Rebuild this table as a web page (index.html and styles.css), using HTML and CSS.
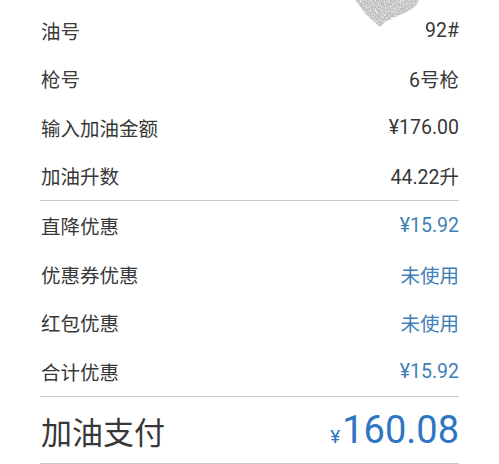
FILE: index.html
```html
<!DOCTYPE html>
<html lang="zh-CN">
<head>
<meta charset="utf-8">
<title>加油支付</title>
<link rel="stylesheet" href="styles.css">
</head>
<body>
<div class="page">
  <svg class="smudge" width="90" height="30" viewBox="0 0 90 30" aria-hidden="true">
    <defs>
      <filter id="grain" x="0" y="0" width="100%" height="100%">
        <feTurbulence type="fractalNoise" baseFrequency="0.8" numOctaves="2" seed="3" result="n"/>
        <feColorMatrix in="n" type="matrix" values="0 0 0 0 0.5  0 0 0 0 0.5  0 0 0 0 0.5  0 0 0 -2.2 1.9" result="g"/>
        <feComposite in="g" in2="SourceGraphic" operator="in"/>
      </filter>
    </defs>
    <polygon points="12,0 76,0 73,6 64,12 52,17 42,22 37,27 31,22 22,13" fill="#000" filter="url(#grain)"/>
  </svg>
  <section class="group">
    <div class="row"><span class="label">油号</span><span class="value">92#</span></div>
    <div class="row"><span class="label">枪号</span><span class="value">6号枪</span></div>
    <div class="row"><span class="label">输入加油金额</span><span class="value">¥176.00</span></div>
    <div class="row"><span class="label">加油升数</span><span class="value">44.22升</span></div>
  </section>
  <section class="group group-discount">
    <div class="row"><span class="label">直降优惠</span><span class="value blue">¥15.92</span></div>
    <div class="row"><span class="label">优惠券优惠</span><span class="value blue">未使用</span></div>
    <div class="row"><span class="label">红包优惠</span><span class="value blue">未使用</span></div>
    <div class="row"><span class="label">合计优惠</span><span class="value blue">¥15.92</span></div>
  </section>
  <section class="total">
    <span class="total-label">加油支付</span>
    <span class="total-value"><span class="yen">¥</span>160.08</span>
  </section>
</div>
</body>
</html>
```
FILE: styles.css
```css
html, body {
  margin: 0;
  padding: 0;
  background: #ffffff;
}
body {
  font-family: "Roboto", "Noto Sans CJK SC", sans-serif;
  color: #383838;
}
.page {
  position: relative;
  padding: 6px 40px 0 40px;
  height: 458px;
  overflow: hidden;
}
.smudge {
  position: absolute;
  top: 0;
  left: 343px;
}
.group {
  display: flex;
  flex-direction: column;
}
.group:first-child,
.group {
  flex-shrink: 0;
}
.group-discount {
  border-top: 1px solid #c9c9c9;
}
.row {
  display: flex;
  justify-content: space-between;
  align-items: center;
  height: 48.5px;
  font-size: 19.5px;
}
.group-discount .row {
  height: 48.75px;
}
.label {
  padding-left: 1px;
}
.value {
  color: #383838;
}
.blue {
  color: #3f7fb8;
}
.total {
  display: flex;
  justify-content: space-between;
  align-items: center;
  height: 66px;
  border-top: 1px solid #c9c9c9;
  border-bottom: 1px solid #c9c9c9;
}
.total-label {
  font-size: 31px;
  padding-left: 1px;
}
.total-value {
  font-size: 38px;
  color: #2f76c2;
}
.yen {
  font-size: 19px;
  margin-right: 2px;
}
```
